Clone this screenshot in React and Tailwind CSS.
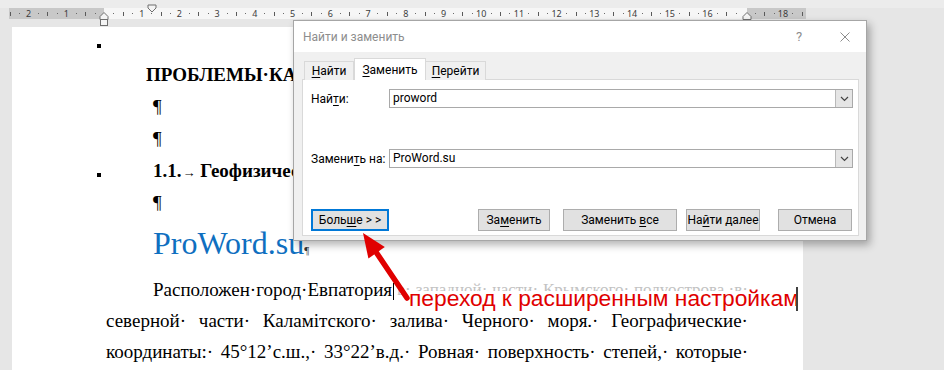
import React from "react";

const PX = 37.72;
const ZERO = 104;

function Ruler() {
  const ticks = [];
  for (let i = -10; i <= 74; i++) {
    const x = ZERO + (i * PX) / 4;
    const m = ((i % 4) + 4) % 4;
    if (m === 0) {
      const n = i / 4;
      if (n === 0 || n === 17) continue;
      ticks.push(
        <span
          key={i}
          className="absolute top-[8px] h-[11px] leading-[11px] text-[9px] text-[#3c3c3c] -translate-x-1/2 [font-family:Noto_Sans,sans-serif]"
          style={{ left: x }}
        >
          {Math.abs(n)}
        </span>
      );
    } else if (m === 2) {
      ticks.push(
        <span key={i} className="absolute top-[12px] w-px h-[4px] bg-[#5a5a5a]" style={{ left: Math.round(x) }} />
      );
    } else {
      ticks.push(
        <span key={i} className="absolute top-[13px] w-px h-px bg-[#6a6a6a]" style={{ left: Math.round(x) }} />
      );
    }
  }
  return (
    <div className="relative h-[27px] bg-[#e6e6e6]">
      <div className="h-[8px] bg-[#ececec]" />
      <div className="flex h-[11px] ml-[9px]">
        <div className="w-[95px] bg-[#c8c8c8]" />
        <div className="w-[643px] bg-[#f6f6f6]" />
        <div className="w-[59px] bg-[#c8c8c8]" />
      </div>
      {ticks}
      <svg className="absolute left-0 top-0" width="944" height="27">
        <polygon points="148,5 156,5 156,8 152,12 148,8" fill="#f4f4f4" stroke="#6f6f6f" strokeWidth="1" />
        <polygon points="100,19.5 100,16.5 104,12.5 108,16.5 108,19.5" fill="#f4f4f4" stroke="#6f6f6f" strokeWidth="1" />
        <rect x="100.5" y="19.5" width="7" height="6" fill="#f4f4f4" stroke="#6f6f6f" strokeWidth="1" />
        <polygon points="743,19.5 743,16.5 747,12.5 751,16.5 751,19.5" fill="#f4f4f4" stroke="#6f6f6f" strokeWidth="1" />
      </svg>
    </div>
  );
}

function Bullet({ mt }) {
  return <div className={"w-[4px] h-[4px] bg-black " + mt} />;
}

function JustLine({ words }) {
  return (
    <div className="flex justify-between whitespace-nowrap h-[31px] leading-[31px]">
      {words.map((w, i) => (
        <span key={i}>{w}</span>
      ))}
    </div>
  );
}

function Btn({ w, children, focus }) {
  return (
    <div
      className={
        "h-[22px] flex items-center justify-center bg-[#e1e1e1] text-black whitespace-nowrap " +
        w +
        (focus ? " border-2 border-[#0078d7]" : " border border-[#adadad]")
      }
    >
      {children}
    </div>
  );
}

function Field({ label, value }) {
  return (
    <div className="flex items-center h-[19px]">
      <div className="w-[78px] text-black whitespace-nowrap">{label}</div>
      <div className="flex-1 h-[19px] border border-[#a9a9a9] flex bg-white">
        <div className="flex-1 pl-[3px] leading-[17px] text-black">{value}</div>
        <div className="w-[17px] h-[17px] bg-[#e5e5e5] border-l border-[#b9b9b9] flex items-center justify-center">
          <svg width="9" height="6" viewBox="0 0 9 6">
            <path d="M1 1 L4.5 4.5 L8 1" fill="none" stroke="#444" strokeWidth="1.2" />
          </svg>
        </div>
      </div>
    </div>
  );
}

function Dialog() {
  return (
    <div className="absolute left-[293px] top-[20px] w-[574px] h-[221px] border border-[#a6a6a6] bg-[#f0f0f0] shadow-[3px_4px_8px_rgba(0,0,0,0.3)] flex flex-col [font-family:Roboto,sans-serif] text-[12px]">
      <div className="h-[31px] bg-white flex items-center pl-[9px] pr-[16px] shrink-0">
        <span className="text-[#8d8d8d]">Найти и заменить</span>
        <span className="ml-auto text-[#8d8d8d] text-[13px] w-[10px] text-center mr-[36px]">?</span>
        <svg width="10" height="10" viewBox="0 0 10 10">
          <path d="M0.5 0.5 L9.5 9.5 M9.5 0.5 L0.5 9.5" stroke="#8d8d8d" strokeWidth="1" />
        </svg>
      </div>
      <div className="flex-1 pl-[8px] pt-[6px] flex flex-col">
        <div className="flex items-end h-[22px] ml-[2px] relative z-10 -mb-px">
          <div className="w-[50px] h-[19px] border border-b-0 border-[#d9d9d9] bg-[#f0f0f0] flex items-center justify-center text-black">
            <span><u className="underline-offset-2">Н</u>айти</span>
          </div>
          <div className="w-[72px] h-[22px] border border-b-0 border-[#d9d9d9] bg-white flex items-center justify-center text-black">
            <span><u className="underline-offset-2">З</u>аменить</span>
          </div>
          <div className="w-[60px] h-[19px] border border-b-0 border-l-0 border-[#d9d9d9] bg-[#f0f0f0] flex items-center justify-center text-black">
            <span><u className="underline-offset-2">П</u>ерейти</span>
          </div>
        </div>
        <div className="w-[557px] h-[157px] bg-white border border-[#d9d9d9] pl-[8px] pr-[5px] pt-[9px] flex flex-col">
          <Field label={<span>Най<u className="underline-offset-2">т</u>и:</span>} value="proword" />
          <div className="h-[41px]" />
          <Field label={<span>Замени<u className="underline-offset-2">т</u>ь на:</span>} value="ProWord.su" />
          <div className="h-[41px]" />
          <div className="flex items-center">
            <Btn w="w-[78px]" focus>
              <span>Боль<u className="underline-offset-2">ш</u>е &gt; &gt;</span>
            </Btn>
            <div className="w-[89px]" />
            <Btn w="w-[72px]">
              <span>За<u className="underline-offset-2">м</u>енить</span>
            </Btn>
            <div className="w-[13px]" />
            <Btn w="w-[114px]">
              <span>Заменить <u className="underline-offset-2">в</u>се</span>
            </Btn>
            <div className="w-[9px]" />
            <Btn w="w-[74px]">
              <span>На<u className="underline-offset-2">й</u>ти далее</span>
            </Btn>
            <div className="w-[18px]" />
            <Btn w="w-[74px]">
              <span>Отмена</span>
            </Btn>
          </div>
        </div>
      </div>
    </div>
  );
}

export default function App() {
  return (
    <div className="relative w-[944px] h-[370px] overflow-hidden bg-[#e6e6e6]">
      <Ruler />
      <div className="flex h-[343px]">
        <div className="w-[12px] shrink-0 bg-[#e6e6e6]" />
        <div className="w-[791px] shrink-0 bg-white pl-[85px] pr-[55px] [font-family:Liberation_Serif,serif] text-[19px] text-black">
          <div className="flex h-[32px]">
            <div className="w-[9px] shrink-0"><Bullet mt="mt-[17px]" /></div>
          </div>
          <div className="flex h-[32px] leading-[32px]">
            <div className="w-[9px] shrink-0" />
            <div className="pl-[40px] font-bold whitespace-nowrap">ПРОБЛЕМЫ·КАЧЕСТВА·ВОДЫ</div>
          </div>
          <div className="flex h-[32px] leading-[32px]">
            <div className="w-[9px] shrink-0" />
            <div className="pl-[47px]">¶</div>
          </div>
          <div className="flex h-[32px] leading-[32px]">
            <div className="w-[9px] shrink-0" />
            <div className="pl-[47px]">¶</div>
          </div>
          <div className="flex h-[32px] leading-[32px]">
            <div className="w-[9px] shrink-0"><Bullet mt="mt-[18px]" /></div>
            <div className="pl-[47px] font-bold whitespace-nowrap">1.1.<span className="text-[13px] ml-[1px]">→</span> Геофизические·условия</div>
          </div>
          <div className="flex h-[32px] leading-[32px]">
            <div className="w-[9px] shrink-0" />
            <div className="pl-[47px]">¶</div>
          </div>
          <div className="flex h-[48px] leading-[48px]">
            <div className="w-[9px] shrink-0" />
            <div className="pl-[47px] text-[32px] text-[#0f6fc0] whitespace-nowrap">
              ProWord.su<span className="text-[11px] text-[#333]">¶</span>
            </div>
          </div>
          <div className="pl-[9px] pt-[7px]">
            <div className="flex h-[31px] leading-[31px] whitespace-nowrap pl-[47px] items-start">
              <span>Расположен·город·Евпатория</span>
              <span className="w-px h-[17px] bg-black mt-[9px] ml-[1px]" />
              <div className="flex-1 flex justify-between text-[#c2c2c2] text-[17px] ml-[3px]">
                <span>в·</span>
                <span>западной·</span>
                <span>части·</span>
                <span>Крымского·</span>
                <span>полуострова,·в·</span>
              </div>
            </div>
            <JustLine words={["северной·", "части·", "Каламітского·", "залива·", "Черного·", "моря.·", "Географические·"]} />
            <JustLine words={["координаты:·", "45°12’с.ш.,·", "33°22’в.д.·", "Ровная·", "поверхность·", "степей,·", "которые·"]} />
          </div>
        </div>
        <div className="flex-1 bg-[#e6e6e6]" />
      </div>

      <Dialog />

      <div className="absolute left-[402px] top-[291px] w-[398px] h-[22px] bg-white" />
      <div className="absolute left-[409px] top-[286px] h-[24px] leading-[24px] text-[22.8px] text-[#e00000] whitespace-nowrap [font-family:Liberation_Sans,sans-serif]">
        переход к расширенным настройкам
      </div>
      <div className="absolute left-[796px] top-[287px] w-[2px] h-[24px] bg-[#404040]" />

      <svg className="absolute left-0 top-0 pointer-events-none" width="944" height="370">
        <line x1="376" y1="252" x2="407" y2="298" stroke="#e00000" strokeWidth="5.5" strokeLinecap="round" />
        <polygon points="363,233 384.8,247.1 368.4,258.5" fill="#e00000" />
      </svg>
    </div>
  );
}
